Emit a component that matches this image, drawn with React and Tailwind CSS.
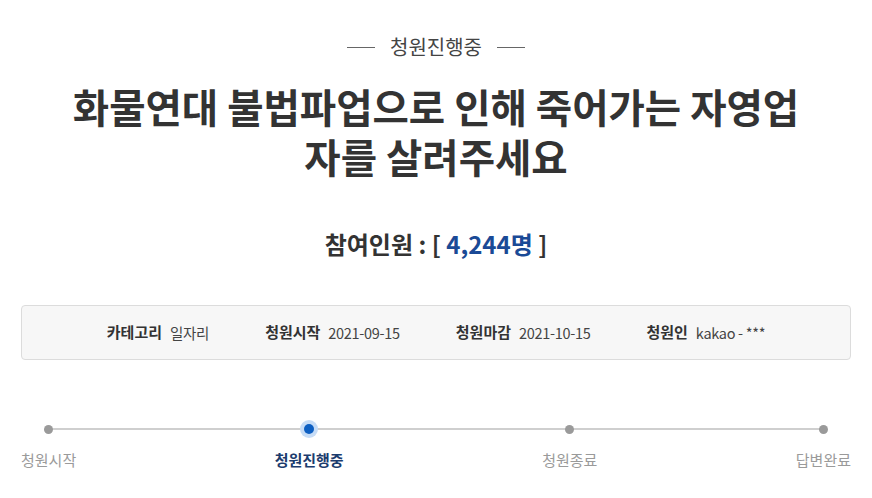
import React from "react";

const steps = [
  { label: "청원시작", active: false },
  { label: "청원진행중", active: true },
  { label: "청원종료", active: false },
  { label: "답변완료", active: false },
];

const info = [
  { label: "카테고리", value: "일자리" },
  { label: "청원시작", value: "2021-09-15" },
  { label: "청원마감", value: "2021-10-15" },
  { label: "청원인", value: "kakao - ***" },
];

function App() {
  return (
    <div
      className="min-h-screen bg-white px-[21px] pt-[33px]"
      style={{ fontFamily: '"Noto Sans CJK KR", "Noto Sans", sans-serif' }}
    >
      {/* Status heading */}
      <div className="flex items-center justify-center gap-[15px] text-[20px] leading-[28px] text-[#444]">
        <span className="h-px w-[28px] bg-[#666]"></span>
        <span>청원진행중</span>
        <span className="h-px w-[28px] bg-[#666]"></span>
      </div>

      {/* Title */}
      <h1 className="mx-auto mt-[20px] max-w-[740px] text-center text-[39.5px] font-bold leading-[50px] text-[#333]">
        화물연대 불법파업으로 인해 죽어가는 자영업자를 살려주세요
      </h1>

      {/* Count */}
      <div className="mt-[46px] text-center text-[24px] font-bold leading-[34px] text-[#333]">
        참여인원 : [ <span className="text-[#1a4a96]">4,244명</span> ]
      </div>

      {/* Info box */}
      <div className="mt-[44px] flex h-[55px] items-center justify-center gap-[56px] rounded-[4px] border border-[#dcdcdc] bg-[#f7f7f7] text-[15px] text-[#333]">
        {info.map((item) => (
          <div key={item.label} className="flex items-center gap-[8px]">
            <span className="font-bold">{item.label}</span>
            <span className="text-[14.5px] tracking-[-0.3px] text-[#444]">{item.value}</span>
          </div>
        ))}
      </div>

      {/* Progress */}
      <div className="relative mt-[60px] flex justify-between">
        <div className="absolute left-[26px] right-[27px] top-[8px] h-[2px] bg-[#cfcfcf]"></div>
        {steps.map((step) => (
          <div key={step.label} className="relative flex flex-col items-center">
            <div className="flex h-[18px] w-[18px] items-center justify-center">
              {step.active ? (
                <span className="flex h-[18px] w-[18px] items-center justify-center rounded-full bg-[#c6dcf6]">
                  <span className="h-[10px] w-[10px] rounded-full bg-[#0d5fc2]"></span>
                </span>
              ) : (
                <span className="h-[9px] w-[9px] rounded-full bg-[#9a9a9a]"></span>
              )}
            </div>
            <span
              className={
                step.active
                  ? "mt-[11px] text-[15px] font-bold leading-[22px] text-[#1c3c6e]"
                  : "mt-[11px] text-[15px] leading-[22px] text-[#9a9a9a]"
              }
            >
              {step.label}
            </span>
          </div>
        ))}
      </div>
    </div>
  );
}

export default App;
